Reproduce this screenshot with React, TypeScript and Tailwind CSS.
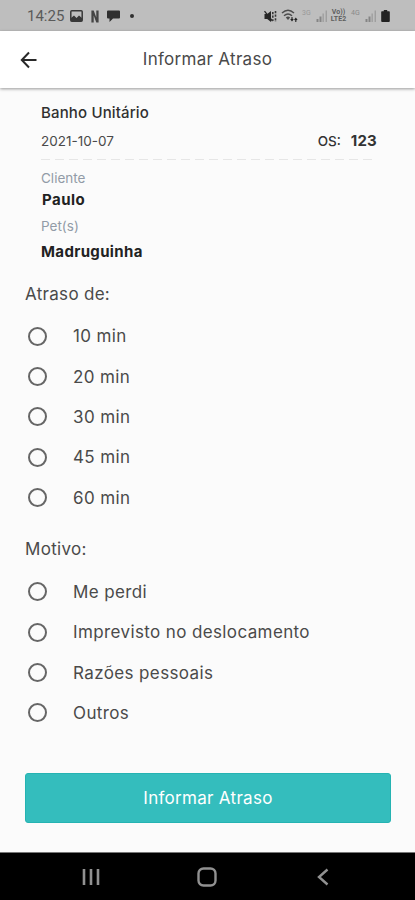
import { useState } from "react";

const delays = ["10 min", "20 min", "30 min", "45 min", "60 min"];
const reasons = ["Me perdi", "Imprevisto no deslocamento", "Razões pessoais", "Outros"];

function SignalIcon() {
  return (
    <svg width="12" height="12" viewBox="0 0 12 12" fill="#858585">
      <rect x="0.5" y="9" width="2" height="3" />
      <rect x="3.5" y="6.5" width="2" height="5.5" />
      <rect x="6.5" y="3.5" width="1.3" height="8.5" fill="#9c9c9c" />
      <rect x="9.6" y="0.5" width="1.3" height="11.5" fill="#9c9c9c" />
    </svg>
  );
}

function StatusBar() {
  return (
    <div className="flex h-[31px] shrink-0 items-center bg-[#bebebe] pt-px pl-[27px] pr-[25px] text-[#5a5a5a]">
      <span className="w-[43px] text-[15px] leading-none font-['Roboto',sans-serif]">14:25</span>
      <svg className="shrink-0" width="13" height="12" viewBox="0 0 13 12">
        <rect x="0.8" y="0.8" width="11.4" height="10.4" rx="1" fill="none" stroke="#383838" strokeWidth="1.5" />
        <path d="M1 10.5V8l3-2.5L6.5 8 9 5.5l3 2.5v3H1z" fill="#383838" />
      </svg>
      <svg className="ml-[8px] shrink-0" width="8" height="13" viewBox="0 0 8 13">
        <path d="M0.4 0.5h2.3l2.6 7V0.5h2.3v12H5.3l-2.6-7v7H0.4z" fill="#444" />
      </svg>
      <svg className="ml-[8px] shrink-0" width="13" height="12" viewBox="0 0 13 12">
        <path d="M1 0.5h11q1 0 1 1v6q0 1-1 1H6L2.5 12V8.5H1q-1 0-1-1v-6q0-1 1-1z" fill="#303030" />
      </svg>
      <span className="ml-[10px] size-1 rounded-full bg-[#303030]" />

      <div className="ml-auto flex items-center">
        <svg width="13" height="13" viewBox="0 0 13 13">
          <path d="M0.5 4h2.7L7 1v11L3.2 9H0.5z" fill="#262626" />
          <path d="M0.5 1.2l8 10" stroke="#262626" strokeWidth="1.3" />
          <path d="M8.8 2v9M11.5 1v11" stroke="#383838" strokeWidth="1.6" strokeDasharray="2.2 1.4" />
        </svg>
        <svg className="ml-[4px]" width="17" height="14" viewBox="0 0 17 14" fill="none" stroke="#4c4c4c" strokeWidth="1.4">
          <path d="M1 4q6-5.5 12 0M3 6.7q4-3.5 8 0" />
          <path d="M4.8 8.4q2.2-2 4.4 0L7 11z" fill="#4c4c4c" stroke="none" />
          <path d="M11 8v3.5M9.7 10l1.3 1.7 1.3-1.7M14.8 13V9.5M13.5 11l1.3-1.7 1.3 1.7" stroke="#222" strokeWidth="1.1" />
        </svg>
        <span className="ml-[4px] w-[14px] pb-[5px] text-[7px] leading-none font-['Roboto',sans-serif] text-[#999]">3G</span>
        <SignalIcon />
        <span className="ml-[2px] flex w-[17px] flex-col items-center text-[7px] leading-[7px] font-bold font-['Roboto',sans-serif] text-[#5e5e5e]">
          <span>Vo))</span>
          <span>LTE2</span>
        </span>
        <span className="ml-[4px] w-[14px] pb-[5px] text-[7px] leading-none font-['Roboto',sans-serif] text-[#8a8a8a]">4G</span>
        <SignalIcon />
        <svg className="ml-[4px]" width="9" height="12" viewBox="0 0 9 12" fill="#222">
          <path d="M2.8 0h3.4v1.3H8q.8 0 .8.8v9q0 .9-.9.9H1.1Q.2 12 .2 11.1V2.1q0-.8.8-.8h1.8z" />
        </svg>
      </div>
    </div>
  );
}

function RadioList({
  options,
  value,
  onChange,
}: {
  options: string[];
  value: string;
  onChange: (v: string) => void;
}) {
  return (
    <div>
      {options.map((o) => (
        <button
          key={o}
          onClick={() => onChange(o)}
          className="flex h-[40.35px] w-full items-center pl-[2.5px] text-left text-[17px] tracking-[0.38px]"
        >
          <span className="mr-[26.5px] flex size-[19px] shrink-0 items-center justify-center rounded-full border-2 border-[#666]">
            {value === o ? <span className="size-[9px] rounded-full bg-[#34bdbd]" /> : null}
          </span>
          <span className="pt-[2px]">{o}</span>
        </button>
      ))}
    </div>
  );
}

export default function App() {
  const [delay, setDelay] = useState("");
  const [reason, setReason] = useState("");

  return (
    <div className="flex h-[900px] w-[415px] flex-col overflow-hidden bg-[#fbfbfb] font-['Inter','Liberation_Sans',sans-serif] text-[#4a4a4a]">
      <StatusBar />

      <header className="z-10 grid h-[57px] shrink-0 grid-cols-[60px_1fr_60px] items-center bg-white shadow-[0_1px_3px_rgba(0,0,0,0.4)]">
        <button className="pl-[20px]" aria-label="Voltar">
          <svg width="18" height="18" viewBox="0 0 18 18" fill="none" stroke="#292929" strokeWidth="2">
            <path d="M9 1.5L1.8 9 9 16.5M2 9h14.5" />
          </svg>
        </button>
        <h1 className="pt-px text-center text-[17px] tracking-[0.3px]">Informar Atraso</h1>
      </header>

      <main className="flex-1 pt-[15px] pr-[24px] pl-[25px]">
        <section className="pl-[16px] pr-[14px]">
          <div className="text-[15px] leading-5 font-medium tracking-[0.15px] text-[#303030]">Banho Unitário</div>
          <div className="mt-[8px] flex h-5 items-center justify-between text-[13.5px]">
            <span>2021-10-07</span>
            <span className="flex items-center font-medium text-[#333]">
              OS:<strong className="ml-[10px] text-[15px] font-bold tracking-[0.2px]">123</strong>
            </span>
          </div>
          <svg className="mt-[8px] block w-full" height="2">
            <path d="M0 0.5h336" stroke="#e6e6e6" strokeWidth="1" strokeDasharray="9 5" />
          </svg>
          <div className="mt-[7px] text-[13.5px] leading-5 text-[#929ba7]">Cliente</div>
          <div className="pt-px pl-px text-[15px] leading-[22px] font-bold tracking-[0.45px] text-[#222]">Paulo</div>
          <div className="mt-[5px] text-[13.5px] leading-5 text-[#929ba7]">Pet(s)</div>
          <div className="mt-[4px] pt-px text-[15px] leading-[22px] font-bold tracking-[0.35px] text-[#222]">Madruguinha</div>
        </section>

        <h2 className="mt-[19px] mb-[10px] text-[17px] leading-6 tracking-[0.3px]">Atraso de:</h2>
        <RadioList options={delays} value={delay} onChange={setDelay} />

        <h2 className="mt-[19px] mb-[11px] text-[17px] leading-6 tracking-[0.3px]">Motivo:</h2>
        <RadioList options={reasons} value={reason} onChange={setReason} />

        <button className="mt-[40px] h-[50px] w-full rounded-[3px] border border-[#25b3b2] bg-[#34bdbd] pt-[2px] text-[17px] tracking-[0.3px] text-white">
          Informar Atraso
        </button>
      </main>

      <nav className="grid h-[48px] shrink-0 grid-cols-3 items-center border-t border-[#777] bg-black text-[#919191]">
        <svg className="ml-[82px]" width="18" height="18" viewBox="0 0 18 18" stroke="currentColor" strokeWidth="2.6">
          <path d="M2 1v16M9 1v16M16 1v16" />
        </svg>
        <svg className="mx-auto" width="20" height="20" viewBox="0 0 20 20" fill="none" stroke="currentColor" strokeWidth="2.4">
          <rect x="1.5" y="1.5" width="17" height="17" rx="5" />
        </svg>
        <svg className="ml-[40px]" width="12" height="18" viewBox="0 0 12 18" fill="none" stroke="currentColor" strokeWidth="2.4">
          <path d="M10.5 1.5L2 9l8.5 7.5" />
        </svg>
      </nav>
    </div>
  );
}
